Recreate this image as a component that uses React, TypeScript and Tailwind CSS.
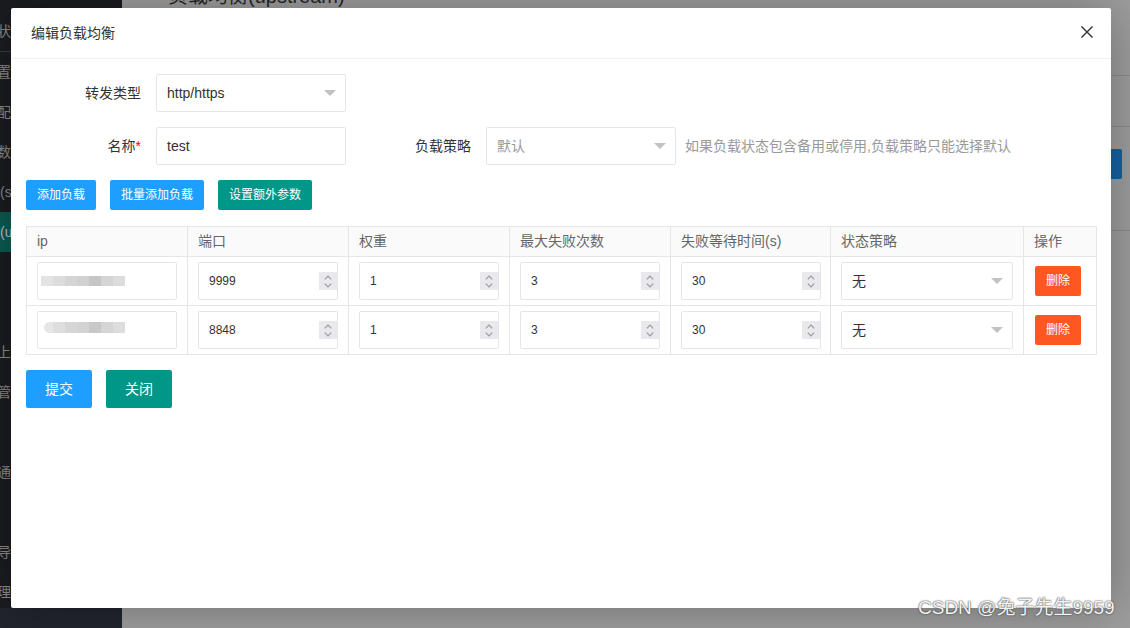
import React from "react";

const FONT = { fontFamily: '"Liberation Sans", "Noto Sans CJK SC", sans-serif' };

function Arrow() {
  return (
    <span className="absolute right-[9px] top-1/2 -mt-[3px] h-0 w-0 border-l-[6px] border-r-[6px] border-t-[6px] border-l-transparent border-r-transparent border-t-[#c2c2c2]" />
  );
}

function Select({ value, w, muted }: { value: string; w: string; muted?: boolean }) {
  return (
    <div
      className={`relative flex h-[38px] ${w} items-center rounded-[2px] border border-[#e6e6e6] bg-white pl-[10px] text-[14px] ${
        muted ? "text-[#999]" : "text-[#333]"
      }`}
    >
      {value}
      <Arrow />
    </div>
  );
}

function Spinner() {
  return (
    <div className="absolute right-0 top-[9px] flex h-[18px] w-[18px] flex-col items-center justify-center gap-[3px] bg-[#e8e8ed]">
      <svg width="8" height="5" viewBox="0 0 8 5">
        <path d="M0.8 4.4 L4 1 L7.2 4.4" stroke="#9a9a9a" strokeWidth="1.1" fill="none" />
      </svg>
      <svg width="8" height="5" viewBox="0 0 8 5">
        <path d="M0.8 0.6 L4 4 L7.2 0.6" stroke="#9a9a9a" strokeWidth="1.1" fill="none" />
      </svg>
    </div>
  );
}

function NumInput({ v }: { v: string }) {
  return (
    <div className="relative flex h-[38px] w-[140px] items-center rounded-[2px] border border-[#e6e6e6] bg-white pl-[10px] text-[12px] text-[#333]">
      {v}
      <Spinner />
    </div>
  );
}

function IpInput({ row }: { row: number }) {
  const colors =
    row === 0
      ? ["#e3e3e3", "#dcdcdc", "#d5d5d5", "#d1d1d1", "#c6c6c6", "#d4d4d4", "#dcdcdc"]
      : ["#e6e6e6", "#dedede", "#d6d6d6", "#d3d3d3", "#c8c8c8", "#d5d5d5", "#dddddd"];
  return (
    <div className="relative h-[38px] w-[140px] rounded-[2px] border border-[#e6e6e6] bg-white">
      <div
        className={`absolute flex blur-[0.6px] ${
          row === 0 ? "left-[3px] top-[13px] h-[10px]" : "left-[6px] top-[10px] h-[11px]"
        }`}
      >
        {colors.map((c, i) => (
          <div
            key={i}
            className={`h-full ${row === 1 && i === 0 ? "w-[9px] rounded-l-full" : "w-[12px]"}`}
            style={{ backgroundColor: c }}
          />
        ))}
      </div>
    </div>
  );
}

const cols = [
  { t: "ip", w: "w-[161px]" },
  { t: "端口", w: "w-[161px]" },
  { t: "权重", w: "w-[161px]" },
  { t: "最大失败次数", w: "w-[161px]" },
  { t: "失败等待时间(s)", w: "w-[160px]" },
  { t: "状态策略", w: "w-[193px]" },
  { t: "操作", w: "w-[73px]" },
];

function Row({ idx, port }: { idx: number; port: string }) {
  const cells = [
    <IpInput row={idx} />,
    <NumInput v={port} />,
    <NumInput v="1" />,
    <NumInput v="3" />,
    <NumInput v="30" />,
    <Select value="无" w="w-[172px]" />,
    <button className="ml-[1px] h-[30px] w-[46px] rounded-[2px] bg-[#ff5722] text-[12px] text-white">删除</button>,
  ];
  return (
    <div className="flex">
      {cells.map((c, i) => (
        <div
          key={i}
          className={`${cols[i].w} flex h-[49px] items-center border-b border-r border-[#e6e6e6] pl-[10px]`}
        >
          {c}
        </div>
      ))}
    </div>
  );
}

const sideItems: { t: string; active?: boolean }[] = [
  { t: "状态" },
  { t: "置" },
  { t: "配置" },
  { t: "数" },
  { t: "(server)" },
  { t: "(upstream)", active: true },
  { t: "" },
  { t: "" },
  { t: "上传" },
  { t: "管理" },
  { t: "" },
  { t: "通知" },
  { t: "" },
  { t: "导出" },
  { t: "理" },
];

export default function App() {
  return (
    <div className="relative flex h-[628px] w-[1130px] overflow-hidden" style={FONT}>
      {/* background page (dimmed) */}
      <div className="flex w-[122px] flex-col bg-[#1b1c20]">
        <div className="flex-1 overflow-hidden pt-[12px]">
          {sideItems.map((s, i) => (
            <div
              key={i}
              className={`flex h-[40px] items-center text-[14px] ${
                s.active ? "bg-[#0c5b51] text-[#b5c4c1]" : "text-[#8a8a8a]"
              } ${i === 0 ? "border-b border-[#3a3b40]" : ""}`}
            >
              <span className={s.t.startsWith("(") ? "" : "-ml-[3px]"}>{s.t}</span>
            </div>
          ))}
        </div>
        <div className="h-[20px] bg-[#22252e]" />
      </div>
      <div className="flex flex-1 flex-col bg-[#9e9e9e]">
        <div className="h-[76px] border-b border-[#8d8d8d] pl-[46px]">
          <div className="-mt-[18px] text-[20px] leading-[28px] text-[#262626]">负载均衡(upstream)</div>
        </div>
        <div className="h-[51px] border-b border-[#8d8d8d]" />
        <div className="flex h-[104px] justify-end border-b border-[#8d8d8d] pr-[8px] pt-[22px]">
          <div className="h-[30px] w-[60px] rounded-[2px] bg-[#1364a2]" />
        </div>
      </div>

      {/* modal */}
      <div className="absolute left-[11px] top-[8px] flex h-[600px] w-[1100px] flex-col rounded-[2px] bg-white shadow-[1px_1px_50px_rgba(0,0,0,0.3)]">
        <div className="relative flex h-[51px] items-center border-b border-[#f0f0f0] pl-[20px] text-[14px] text-[#333]">
          编辑负载均衡
          <svg className="absolute right-[18px] top-[18px]" width="12" height="12" viewBox="0 0 12 12">
            <path d="M0.5 0.5 L11.5 11.5 M11.5 0.5 L0.5 11.5" stroke="#2e2e38" strokeWidth="1.4" />
          </svg>
        </div>

        <div className="flex flex-col px-[15px] pt-[15px]">
          <div className="flex h-[38px] items-center">
            <div className="w-[130px] pr-[15px] text-right text-[14px] text-[#333]">转发类型</div>
            <Select value="http/https" w="w-[190px]" />
          </div>

          <div className="mt-[15px] flex h-[38px] items-center">
            <div className="w-[130px] pr-[15px] text-right text-[14px] text-[#333]">
              名称<span className="text-[#ff0000]">*</span>
            </div>
            <div className="flex h-[38px] w-[190px] items-center rounded-[2px] border border-[#e6e6e6] pl-[10px] text-[14px] text-[#333]">
              test
            </div>
            <div className="ml-[10px] w-[130px] pr-[15px] text-right text-[14px] text-[#333]">负载策略</div>
            <Select value="默认" w="w-[190px]" muted />
            <div className="ml-[9px] text-[14px] text-[#999]">如果负载状态包含备用或停用,负载策略只能选择默认</div>
          </div>

          <div className="mt-[15px] flex gap-[14px]">
            <button className="h-[30px] rounded-[2px] bg-[#1e9fff] px-[11px] text-[12px] text-white">添加负载</button>
            <button className="h-[30px] rounded-[2px] bg-[#1e9fff] px-[11px] text-[12px] text-white">批量添加负载</button>
            <button className="h-[30px] rounded-[2px] bg-[#009688] px-[11px] text-[12px] text-white">设置额外参数</button>
          </div>

          <div className="mt-[16px] w-[1071px] border-l border-t border-[#e6e6e6]">
            <div className="flex bg-[#fafafa]">
              {cols.map((c, i) => (
                <div
                  key={i}
                  className={`${c.w} flex h-[30px] items-center border-b border-r border-[#e6e6e6] pl-[10px] text-[14px] text-[#666]`}
                >
                  {c.t}
                </div>
              ))}
            </div>
            <Row idx={0} port="9999" />
            <Row idx={1} port="8848" />
          </div>

          <div className="mt-[15px] flex gap-[14px]">
            <button className="h-[38px] rounded-[2px] bg-[#1e9fff] px-[19px] text-[14px] text-white">提交</button>
            <button className="h-[38px] rounded-[2px] bg-[#009688] px-[19px] text-[14px] text-white">关闭</button>
          </div>
        </div>
      </div>

      {/* watermark */}
      <div className="absolute left-[918px] top-[596px] text-[19px] leading-[24px] text-[#f4f4f4] [text-shadow:0_0_2px_#4a4a4a,0_0_1px_#4a4a4a]">
        CSDN @兔子先生9959
      </div>
    </div>
  );
}
